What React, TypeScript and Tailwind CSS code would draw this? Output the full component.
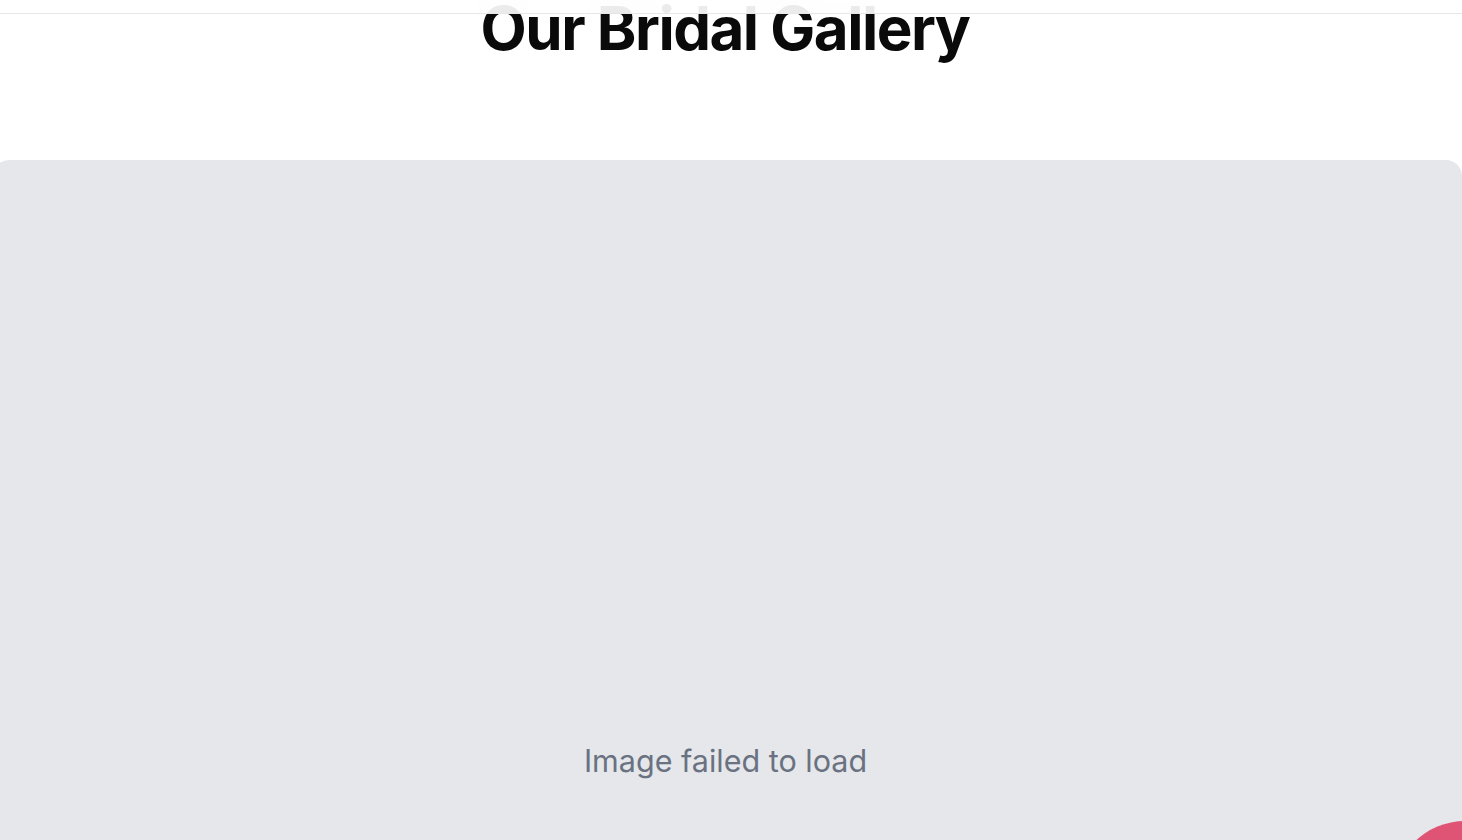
import React from "react";

export default function App() {
  return (
    <div className="relative min-h-screen overflow-hidden bg-white" style={{ fontFamily: "Inter, 'Noto Sans', sans-serif" }}>
      <header className="fixed left-0 right-0 top-0 z-20 h-[14px] border-b border-gray-200 bg-white/90 backdrop-blur-xl" />
      <main className="flex flex-col">
        <h2 className="-mt-[2px] pr-3 text-center text-6xl font-bold tracking-tight text-[#0a0a0a]">
          Our Bridal Gallery
        </h2>
        <div className="mt-[102px] -ml-[7px] flex h-[1000px] w-[calc(100%+7px)] flex-col items-center rounded-2xl bg-gray-200">
          <p className="pr-1 pt-[583px] text-[30.5px] leading-9 text-gray-500">Image failed to load</p>
        </div>
      </main>
      <button
        aria-label="Open chat"
        className="fixed bottom-[-125px] right-[-75px] z-30 h-36 w-36 rounded-full bg-[#df5474]"
      />
    </div>
  );
}
